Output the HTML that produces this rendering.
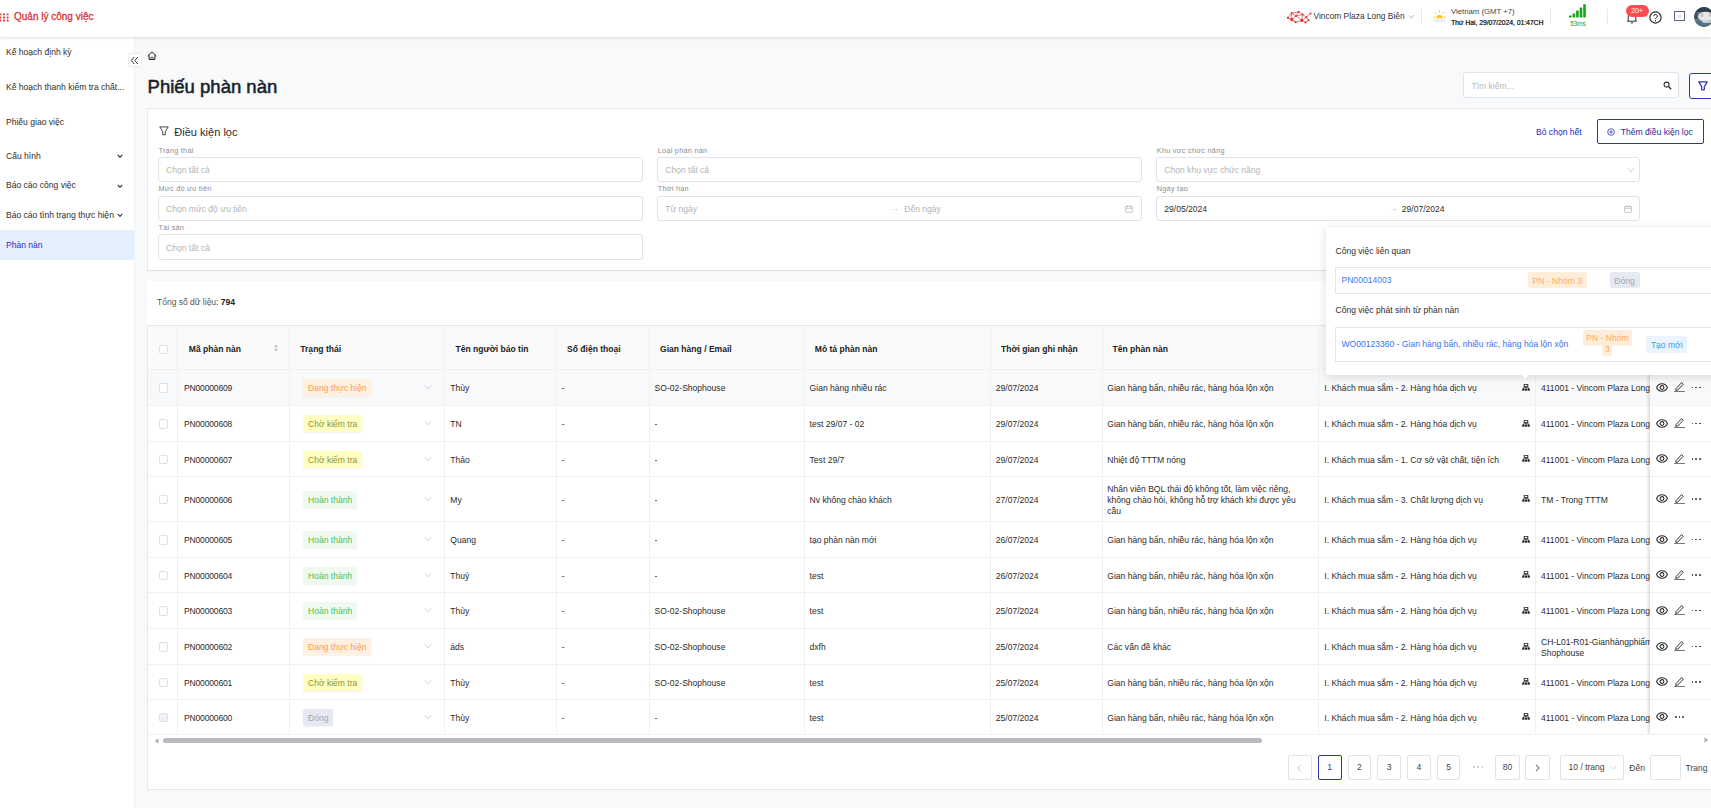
<!DOCTYPE html>
<html lang="vi"><head><meta charset="utf-8"><title>Phiếu phàn nàn</title>
<style>
*{box-sizing:border-box}
html,body{margin:0;padding:0}
body{width:1711px;height:808px;overflow:hidden;position:relative;background:#f8f9fb;
 font-family:"Liberation Sans",sans-serif;font-size:8.55px;color:#303030;line-height:1.2}
.abs{position:absolute}
.t{position:absolute;white-space:nowrap;line-height:12px;height:12px;margin-top:-6px}
#hdr{position:absolute;left:0;top:0;width:1711px;height:37px;background:#fff;box-shadow:0 1px 3px rgba(0,0,0,.13);z-index:5}
#side{position:absolute;left:0;top:37px;width:135px;height:771px;background:#fff;z-index:2;border-right:1px solid #eff1f4}
.mi{position:absolute;left:0;width:134px;height:29.3px}
.mi span{position:absolute;left:6px;top:50%;margin-top:-6px;line-height:12px;white-space:nowrap;color:#2e2e2e}
.card{position:absolute;background:#fff}
.inp{position:absolute;height:24.5px;background:#fff;border:1px solid #dfe3ec;border-radius:3px}
.inp .ph{position:absolute;left:7px;top:50%;margin-top:-4.8px;line-height:12px;color:#b4b4b8;white-space:nowrap}
.lbl{position:absolute;font-size:7.3px;letter-spacing:.25px;color:#8a8d96;white-space:nowrap;line-height:8px;height:8px;margin-top:-4px}
.vl{position:absolute;width:1px;background:#eff0f2}
.hl{position:absolute;height:1px;background:#eff0f2}
.th{position:absolute;font-weight:bold;color:#222;white-space:nowrap;line-height:12px;height:12px;margin-top:-6px}
.td{position:absolute;white-space:nowrap;line-height:11px;color:#2b2b2b}
.cb{position:absolute;width:9px;height:9.5px;border:1px solid #dde0ea;border-radius:2px;background:#fff}
.tag{position:absolute;height:16.5px;line-height:19px;overflow:hidden;padding:0 5px;border-radius:2px;white-space:nowrap;box-shadow:0 1px 2px rgba(0,0,0,.06)}
.tg-o{background:#fff0e2;color:#fb9d4b}
.tg-y{background:#ffffc4;color:#8f9330}
.tg-g{background:#eefaf0;color:#4cbf52}
.tg-d{background:#e6e9f1;color:#a3a8b8}
.tg-b{background:#e9f4fe;color:#3f9be6}
.pg{position:absolute;top:755px;height:25px;border:1px solid #e1e3e8;border-radius:2px;background:#fff;text-align:center;line-height:23.4px;color:#444}
a{color:#3f6df2;text-decoration:none}
</style></head><body>
<div id="hdr"><svg class="abs" style="left:0;top:0" width="12" height="37"><rect x="-0.6" y="13.4" width="2" height="1.9" rx=".4" fill="#e23b3b"/><rect x="3.0" y="13.4" width="2" height="1.9" rx=".4" fill="#e23b3b"/><rect x="6.6000000000000005" y="13.4" width="2" height="1.9" rx=".4" fill="#e23b3b"/><rect x="-0.6" y="16.5" width="2" height="1.9" rx=".4" fill="#e23b3b"/><rect x="3.0" y="16.5" width="2" height="1.9" rx=".4" fill="#e23b3b"/><rect x="6.6000000000000005" y="16.5" width="2" height="1.9" rx=".4" fill="#e23b3b"/><rect x="-0.6" y="19.6" width="2" height="1.9" rx=".4" fill="#e23b3b"/><rect x="3.0" y="19.6" width="2" height="1.9" rx=".4" fill="#e23b3b"/><rect x="6.6000000000000005" y="19.6" width="2" height="1.9" rx=".4" fill="#e23b3b"/></svg><div class="t" style="left:14px;top:17px;font-size:10px;font-weight:normal;-webkit-text-stroke:.3px #dc3535;color:#dc3535">Quản lý công việc</div><svg class="abs" style="left:1286.5px;top:10.5px" width="25" height="13" viewBox="0 0 25 13"><g stroke="#de4a4a" stroke-width=".75"><line x1="0.8" y1="6.8" x2="4.6" y2="2.2"/><line x1="0.8" y1="6.8" x2="4.8" y2="8.4"/><line x1="4.6" y1="2.2" x2="9" y2="4.9"/><line x1="4.8" y1="8.4" x2="9" y2="4.9"/><line x1="4.8" y1="8.4" x2="8.6" y2="11.2"/><line x1="9" y1="4.9" x2="11.6" y2="0.9"/><line x1="9" y1="4.9" x2="14.8" y2="9.4"/><line x1="8.6" y1="11.2" x2="14.8" y2="9.4"/><line x1="11.6" y1="0.9" x2="15.6" y2="3.4"/><line x1="15.6" y1="3.4" x2="14.8" y2="9.4"/><line x1="15.6" y1="3.4" x2="19.4" y2="6.2"/><line x1="14.8" y1="9.4" x2="19.4" y2="6.2"/><line x1="14.8" y1="9.4" x2="18.4" y2="11.4"/><line x1="19.4" y1="6.2" x2="23.6" y2="2.4"/><line x1="19.4" y1="6.2" x2="21.6" y2="9.2"/><line x1="4.6" y1="2.2" x2="11.6" y2="0.9"/><line x1="0.8" y1="6.8" x2="8.6" y2="11.2"/><line x1="9" y1="4.9" x2="15.6" y2="3.4"/><line x1="18.4" y1="11.4" x2="21.6" y2="9.2"/><line x1="4.8" y1="8.4" x2="4.6" y2="2.2"/></g><g fill="#d93030"><circle cx="0.8" cy="6.8" r="1.0"/><circle cx="4.8" cy="8.4" r="1.5"/><circle cx="4.6" cy="2.2" r="1.0"/><circle cx="9" cy="4.9" r="1.0"/><circle cx="8.6" cy="11.2" r="1.0"/><circle cx="11.6" cy="0.9" r="1.0"/><circle cx="14.8" cy="9.4" r="1.5"/><circle cx="15.6" cy="3.4" r="1.0"/><circle cx="19.4" cy="6.2" r="1.0"/><circle cx="18.4" cy="11.4" r="1.0"/><circle cx="23.6" cy="2.4" r="1.0"/><circle cx="21.6" cy="9.2" r="1.0"/></g></svg><div class="t" style="left:1313.5px;top:16.3px;font-size:8.4px;color:#333">Vincom Plaza Long Biên</div><svg style="position:absolute;left:1408.0px;top:13.0px" viewBox="0 0 10 10" width="7" height="7"><path d="M1.2 3 L5 7.2 L8.8 3" fill="none" stroke="#9a9a9a" stroke-width="1.0"/></svg><div class="vl" style="left:1421px;top:9px;height:15px;background:#e9e9ec"></div><svg class="abs" style="left:1432px;top:9px" width="15" height="15" viewBox="0 0 15 15">
<g stroke="#f6c21d" stroke-width=".9" stroke-linecap="round"><path d="M7.5 1.6v1.3M3 3.6l.9.9M12 3.6l-.9.9M1.6 8h1.2M12.4 8h1.2"/></g>
<path d="M4.2 9.4a3.3 3.3 0 0 1 6.6 0z" fill="#f8c51f"/>
<rect x="1.2" y="9.2" width="12.6" height="4.2" rx="2.1" fill="#eef0f4"/></svg><div class="t" style="left:1451px;top:12.2px;font-size:7.75px;color:#444">Vietnam (GMT +7)</div><div class="t" style="left:1451px;top:22.6px;font-size:6.76px;color:#2a2a2a;text-shadow:.2px 0 0 #2a2a2a">Thứ Hai, 29/07/2024, 01:47CH</div><div class="vl" style="left:1550px;top:9px;height:15px;background:#e9e9ec"></div><svg class="abs" style="left:1568.5px;top:4px" width="18" height="14"><rect x="0.0" y="11.399999999999999" width="2.6" height="2.2" rx=".5" fill="#17a317"/><rect x="3.55" y="9.399999999999999" width="2.6" height="4.2" rx=".5" fill="#17a317"/><rect x="7.1" y="6.6" width="2.6" height="7" rx=".5" fill="#17a317"/><rect x="10.649999999999999" y="3.5999999999999996" width="2.6" height="10" rx=".5" fill="#17a317"/><rect x="14.2" y="0.1999999999999993" width="2.6" height="13.4" rx=".5" fill="#17a317"/></svg><div class="t" style="left:1568px;width:20px;text-align:center;top:23.8px;font-size:6.4px;color:#2a9a2a">53ms</div><div class="vl" style="left:1607px;top:9px;height:15px;background:#e9e9ec"></div><svg class="abs" style="left:1626px;top:12px" width="12" height="12" viewBox="0 0 12 12"><path d="M2.2 9.2V5a3.8 3.8 0 0 1 7.6 0v4.2M1.2 9.2h9.6M4.8 10.8h2.4" fill="none" stroke="#333" stroke-width="1"/></svg><div class="abs" style="left:1625.5px;top:4.5px;width:23px;height:12.5px;border-radius:6.3px;background:#ff4b4e;color:#fff;font-size:7.4px;line-height:12.5px;text-align:center;letter-spacing:-.2px">20+</div><svg class="abs" style="left:1648.5px;top:11px" width="13" height="13" viewBox="0 0 13 13"><circle cx="6.5" cy="6.5" r="5.6" fill="none" stroke="#222" stroke-width="1.15"/><path d="M4.7 5.2a1.8 1.8 0 1 1 2.6 1.6c-.6.3-.8.6-.8 1.3" fill="none" stroke="#222" stroke-width="1"/><circle cx="6.5" cy="9.7" r=".65" fill="#222"/></svg><div class="abs" style="left:1673.5px;top:11px;width:11.5px;height:10px;border:1px solid #5d6677;color:#b9bdd0;font-size:5px;line-height:8px;text-align:center">vi</div><svg class="abs" style="left:1694px;top:7px" width="20" height="20" viewBox="0 0 20 20"><defs><clipPath id="av"><circle cx="10" cy="10" r="9.9"/></clipPath></defs>
<g clip-path="url(#av)"><rect width="20" height="20" fill="#5f7a88"/><rect y="0" width="20" height="5" fill="#2e3f50"/><rect x="0" y="4" width="3.4" height="8" fill="#3f4f5e"/><ellipse cx="11.5" cy="9.6" rx="7.4" ry="4.8" fill="#e6e8ea"/><ellipse cx="8" cy="8" rx="1.6" ry="2" fill="#e8b8a4"/><ellipse cx="16" cy="8" rx="1.4" ry="2" fill="#e8b8a4"/><rect x="0" y="14.5" width="20" height="6" fill="#55707e"/><ellipse cx="13" cy="14.5" rx="5" ry="1.6" fill="#c8d2d8"/></g></svg></div><div id="side"><div class="mi" style="top:0.34999999999999964px"><span>Kế hoạch định kỳ</span></div><div class="mi" style="top:35.35px"><span>Kế hoạch thanh kiểm tra chất...</span></div><div class="mi" style="top:70.35px"><span>Phiếu giao việc</span></div><div class="mi" style="top:103.94999999999999px"><span>Cấu hình</span></div><svg style="position:absolute;left:116.7px;top:115.89999999999999px" viewBox="0 0 10 10" width="6" height="6"><path d="M1.2 3 L5 7.2 L8.8 3" fill="none" stroke="#3a3a3a" stroke-width="1.9"/></svg><div class="mi" style="top:133.65px"><span>Báo cáo công việc</span></div><svg style="position:absolute;left:116.7px;top:145.60000000000002px" viewBox="0 0 10 10" width="6" height="6"><path d="M1.2 3 L5 7.2 L8.8 3" fill="none" stroke="#3a3a3a" stroke-width="1.9"/></svg><div class="mi" style="top:163.45px"><span>Báo cáo tình trạng thực hiện</span></div><svg style="position:absolute;left:116.7px;top:175.4px" viewBox="0 0 10 10" width="6" height="6"><path d="M1.2 3 L5 7.2 L8.8 3" fill="none" stroke="#3a3a3a" stroke-width="1.9"/></svg><div class="mi" style="top:193.3px;height:29.3px;background:#e5f0ff"><span style="color:#2a2dc4">Phàn nàn</span></div></div><div class="abs" style="left:127.5px;top:53.3px;width:14px;height:14px;background:#fff;border:1px solid #ebedf1;border-radius:2px;z-index:3">
<svg class="abs" style="left:1px;top:1.6px" width="9" height="9" viewBox="0 0 9 9"><path d="M4.3 1 L1.3 4.5 L4.3 8 M7.8 1 L4.8 4.5 L7.8 8" fill="none" stroke="#333" stroke-width="1"/></svg></div><svg class="abs" style="left:146.6px;top:51.2px" width="10" height="9.5" viewBox="0 0 10 9.5"><path d="M.7 4.9 L5 .9 L9.3 4.9" fill="none" stroke="#222" stroke-width="1" stroke-linejoin="round"/><path d="M2.1 4.2v4.3h5.8V4.2" fill="none" stroke="#222" stroke-width="1"/><path d="M3.9 8.3V6.2h2.2v2.1" fill="none" stroke="#222" stroke-width=".7"/></svg><div class="abs" style="left:147.6px;top:74.6px;font-size:18.5px;line-height:24px;font-weight:normal;color:#1a1f2c;-webkit-text-stroke:.55px #1a1f2c;white-space:nowrap">Phiếu phàn nàn</div><div class="inp" style="left:1463px;top:72px;width:216px;height:26px;border-radius:3px"><span class="ph" style="left:7.5px;color:#b9bbc0">Tìm kiếm...</span><svg class="abs" style="left:199px;top:7.5px" width="9" height="9" viewBox="0 0 9 9"><circle cx="3.6" cy="3.6" r="2.5" fill="none" stroke="#333" stroke-width="1.1"/><path d="M5.5 5.5 L8.2 8.2" stroke="#333" stroke-width="1.4"/></svg></div><div class="abs" style="left:1689px;top:73px;width:26px;height:25.5px;border:1px solid #2d35ad;border-radius:3px;background:#fff"><svg class="abs" style="left:7.5px;top:7px" width="10" height="10" viewBox="0 0 10 10"><path d="M.8 .9h8.4L6.3 5.6v3.2H3.7V5.6z" fill="none" stroke="#2d35ad" stroke-width="1.2" stroke-linejoin="round"/></svg></div><div class="card" style="left:147px;top:108px;width:1570px;height:162.6px;border:1px solid #e4e7ec;border-bottom-color:#dde0e6"></div><svg class="abs" style="left:158.5px;top:125.5px" width="10" height="10" viewBox="0 0 10 10"><path d="M.8 .9h8.4L6.3 5.6v3.2H3.7V5.6z" fill="none" stroke="#333" stroke-width="0.9" stroke-linejoin="round"/></svg><div class="t" style="left:174.3px;top:131.6px;font-size:11.05px;height:14px;line-height:14px;margin-top:-7px;color:#2b2b2b">Điều kiện lọc</div><div class="t" style="left:1536px;top:131.6px;color:#2328c6;font-size:8.57px">Bỏ chọn hết</div><div class="abs" style="left:1597px;top:119px;width:106.5px;height:25px;border:1px solid #2d35ad;border-radius:2px;background:#fff"></div><svg class="abs" style="left:1606.5px;top:128px" width="8" height="8" viewBox="0 0 8 8"><circle cx="4" cy="4" r="3.3" fill="none" stroke="#2d35ad" stroke-width=".8"/><path d="M4 2.3v3.4M2.3 4h3.4" stroke="#2d35ad" stroke-width=".8"/></svg><div class="t" style="left:1620.7px;top:131.6px;color:#262c9e;font-size:8.6px">Thêm điều kiện lọc</div><div class="lbl" style="left:158.5px;top:150.7px">Trạng thái</div><div class="inp" style="left:158px;top:157px;width:484.5px;height:24.5px"><span class="ph">Chọn tất cả</span></div><div class="lbl" style="left:657.8px;top:150.7px">Loại phàn nàn</div><div class="inp" style="left:657.3px;top:157px;width:484.5px;height:24.5px"><span class="ph">Chọn tất cả</span></div><div class="lbl" style="left:1156.8px;top:150.7px">Khu vực chức năng</div><div class="inp" style="left:1156.3px;top:157px;width:483.5px;height:24.5px"><span class="ph">Chọn khu vực chức năng</span><svg style="position:absolute;left:469.5px;top:7.5px" viewBox="0 0 10 10" width="8" height="8"><path d="M1.2 3 L5 7.2 L8.8 3" fill="none" stroke="#b5b7bd" stroke-width="1.0"/></svg></div><div class="lbl" style="left:158.5px;top:188.7px">Mức độ ưu tiên</div><div class="inp" style="left:158px;top:196px;width:484.5px;height:24.5px"><span class="ph">Chọn mức độ ưu tiên</span></div><div class="lbl" style="left:657.8px;top:188.7px">Thời hạn</div><div class="inp" style="left:657.3px;top:196px;width:484.5px;height:24.5px"><span class="ph">Từ ngày</span><span class="ph" style="left:246px">Đến ngày</span><span class="ph" style="left:232.5px;font-size:8px">→</span><svg class="abs" style="left:467px;top:8px" width="8" height="8" viewBox="0 0 8 8"><rect x=".6" y="1.3" width="6.8" height="6" rx=".6" fill="none" stroke="#b5b7bd" stroke-width=".8"/><path d="M.6 3.2h6.8M2.3 .4v1.6M5.7 .4v1.6" stroke="#b5b7bd" stroke-width=".8"/></svg></div><div class="lbl" style="left:1156.8px;top:188.7px">Ngày tạo</div><div class="inp" style="left:1156.3px;top:196px;width:483.5px;height:24.5px"><span class="ph" style="color:#303030">29/05/2024</span><span class="ph" style="left:244.5px;color:#303030">29/07/2024</span><span class="ph" style="left:232px;font-size:8px">→</span><svg class="abs" style="left:467px;top:8px" width="8" height="8" viewBox="0 0 8 8"><rect x=".6" y="1.3" width="6.8" height="6" rx=".6" fill="none" stroke="#b5b7bd" stroke-width=".8"/><path d="M.6 3.2h6.8M2.3 .4v1.6M5.7 .4v1.6" stroke="#b5b7bd" stroke-width=".8"/></svg></div><div class="lbl" style="left:158.5px;top:227.7px">Tài sản</div><div class="inp" style="left:158px;top:234px;width:484.5px;height:25.7px"><span class="ph">Chọn tất cả</span></div><div class="card" style="left:147px;top:281px;width:1570px;height:508.5px;border-bottom:1px solid #e2e5ea"></div><div class="vl" style="left:147px;top:325px;height:464px;background:#e6e8ec"></div><div class="t" style="left:157px;top:302px;color:#555;font-size:8.5px">Tổng số dữ liệu: <b style="color:#222">794</b></div><div class="abs" style="left:148px;top:325px;width:1570px;height:44px;background:#fafafb"></div><div class="abs" style="left:148px;top:369px;width:1570px;height:36px;background:#f8f9fb"></div><div class="hl" style="left:148px;top:325px;width:1570px;background:#e3e5e9"></div><div class="vl" style="left:147px;top:325px;height:409px;background:#e6e8ec"></div><div class="vl" style="left:177px;top:325px;height:409px"></div><div class="vl" style="left:289px;top:325px;height:409px"></div><div class="vl" style="left:444px;top:325px;height:409px"></div><div class="vl" style="left:556px;top:325px;height:409px"></div><div class="vl" style="left:649px;top:325px;height:409px"></div><div class="vl" style="left:804px;top:325px;height:409px"></div><div class="vl" style="left:990px;top:325px;height:409px"></div><div class="vl" style="left:1102px;top:325px;height:409px"></div><div class="vl" style="left:1318px;top:325px;height:409px"></div><div class="vl" style="left:1535px;top:325px;height:409px"></div><div class="hl" style="left:148px;top:369px;width:1570px"></div><div class="hl" style="left:148px;top:405px;width:1570px"></div><div class="hl" style="left:148px;top:441px;width:1570px"></div><div class="hl" style="left:148px;top:476px;width:1570px"></div><div class="hl" style="left:148px;top:521px;width:1570px"></div><div class="hl" style="left:148px;top:557px;width:1570px"></div><div class="hl" style="left:148px;top:592px;width:1570px"></div><div class="hl" style="left:148px;top:628px;width:1570px"></div><div class="hl" style="left:148px;top:664px;width:1570px"></div><div class="hl" style="left:148px;top:699px;width:1570px"></div><div class="hl" style="left:148px;top:734px;width:1570px"></div><div class="cb" style="left:159px;top:344.5px"></div><div class="th" style="left:188.8px;top:349px">Mã phàn nàn</div><div class="th" style="left:300.3px;top:349px">Trạng thái</div><div class="th" style="left:455.5px;top:349px">Tên người báo tin</div><div class="th" style="left:567px;top:349px">Số điện thoại</div><div class="th" style="left:660px;top:349px">Gian hàng / Email</div><div class="th" style="left:814.8px;top:349px">Mô tả phàn nàn</div><div class="th" style="left:1001px;top:349px">Thời gian ghi nhận</div><div class="th" style="left:1112.5px;top:349px">Tên phàn nàn</div><svg class="abs" style="left:273px;top:343.5px" width="6" height="8" viewBox="0 0 6 8"><path d="M3 .6 L5.2 3.2H.8z" fill="#bfbfc4"/><path d="M3 7.4 L5.2 4.8H.8z" fill="#bfbfc4"/></svg><div class="cb" style="left:159px;top:383.0px;"></div><div class="td" style="left:184px;top:383.25px;letter-spacing:-.17px;">PN00000609</div><div class="tag tg-o" style="left:303px;top:379px">Đang thực hiện</div><svg style="position:absolute;left:424.3px;top:383.45px" viewBox="0 0 10 10" width="8" height="8"><path d="M1.2 3 L5 7.2 L8.8 3" fill="none" stroke="#c4c6cc" stroke-width="1.0"/></svg><div class="td" style="left:450.3px;top:383.25px;">Thùy</div><div class="td" style="left:561.8px;top:383.25px;">-</div><div class="td" style="left:654.6px;top:383.25px;">SO-02-Shophouse</div><div class="td" style="left:809.6px;top:383.25px;">Gian hàng nhiều rác</div><div class="td" style="left:995.8px;top:383.25px;">29/07/2024</div><div class="td" style="left:1107.3px;top:383.25px;">Gian hàng bẩn, nhiều rác, hàng hóa lộn xộn</div><div class="td" style="left:1324.3px;top:383.25px;">I. Khách mua sắm - 2. Hàng hóa dịch vụ</div><svg class="abs" style="left:1521.8px;top:383.9px" width="8" height="7" viewBox="0 0 8 7"><rect x="2.2" y=".3" width="3.6" height="2.4" fill="none" stroke="#222" stroke-width=".9"/><path d="M4 2.7v1.2M1.3 5V3.9h5.4V5" fill="none" stroke="#222" stroke-width=".8"/><rect x=".2" y="4.7" width="2.2" height="2" fill="#222"/><rect x="2.9" y="4.7" width="2.2" height="2" fill="#222"/><rect x="5.6" y="4.7" width="2.2" height="2" fill="#222"/></svg><div class="td" style="left:1541px;top:383.25px;width:109px;overflow:hidden">411001 - Vincom Plaza Long Biên</div><div class="cb" style="left:159px;top:419.0px;"></div><div class="td" style="left:184px;top:419.25px;letter-spacing:-.17px;">PN00000608</div><div class="tag tg-y" style="left:303px;top:415px">Chờ kiểm tra</div><svg style="position:absolute;left:424.3px;top:419.45px" viewBox="0 0 10 10" width="8" height="8"><path d="M1.2 3 L5 7.2 L8.8 3" fill="none" stroke="#c4c6cc" stroke-width="1.0"/></svg><div class="td" style="left:450.3px;top:419.25px;">TN</div><div class="td" style="left:561.8px;top:419.25px;">-</div><div class="td" style="left:654.6px;top:419.25px;">-</div><div class="td" style="left:809.6px;top:419.25px;">test 29/07 - 02</div><div class="td" style="left:995.8px;top:419.25px;">29/07/2024</div><div class="td" style="left:1107.3px;top:419.25px;">Gian hàng bẩn, nhiều rác, hàng hóa lộn xộn</div><div class="td" style="left:1324.3px;top:419.25px;">I. Khách mua sắm - 2. Hàng hóa dịch vụ</div><svg class="abs" style="left:1521.8px;top:419.9px" width="8" height="7" viewBox="0 0 8 7"><rect x="2.2" y=".3" width="3.6" height="2.4" fill="none" stroke="#222" stroke-width=".9"/><path d="M4 2.7v1.2M1.3 5V3.9h5.4V5" fill="none" stroke="#222" stroke-width=".8"/><rect x=".2" y="4.7" width="2.2" height="2" fill="#222"/><rect x="2.9" y="4.7" width="2.2" height="2" fill="#222"/><rect x="5.6" y="4.7" width="2.2" height="2" fill="#222"/></svg><div class="td" style="left:1541px;top:419.25px;width:109px;overflow:hidden">411001 - Vincom Plaza Long Biên</div><div class="cb" style="left:159px;top:454.5px;"></div><div class="td" style="left:184px;top:454.75px;letter-spacing:-.17px;">PN00000607</div><div class="tag tg-y" style="left:303px;top:451px">Chờ kiểm tra</div><svg style="position:absolute;left:424.3px;top:454.95px" viewBox="0 0 10 10" width="8" height="8"><path d="M1.2 3 L5 7.2 L8.8 3" fill="none" stroke="#c4c6cc" stroke-width="1.0"/></svg><div class="td" style="left:450.3px;top:454.75px;">Thảo</div><div class="td" style="left:561.8px;top:454.75px;">-</div><div class="td" style="left:654.6px;top:454.75px;">-</div><div class="td" style="left:809.6px;top:454.75px;">Test 29/7</div><div class="td" style="left:995.8px;top:454.75px;">29/07/2024</div><div class="td" style="left:1107.3px;top:454.75px;">Nhiệt độ TTTM nóng</div><div class="td" style="left:1324.3px;top:454.75px;">I. Khách mua sắm - 1. Cơ sở vật chất, tiện ích</div><svg class="abs" style="left:1521.8px;top:455.4px" width="8" height="7" viewBox="0 0 8 7"><rect x="2.2" y=".3" width="3.6" height="2.4" fill="none" stroke="#222" stroke-width=".9"/><path d="M4 2.7v1.2M1.3 5V3.9h5.4V5" fill="none" stroke="#222" stroke-width=".8"/><rect x=".2" y="4.7" width="2.2" height="2" fill="#222"/><rect x="2.9" y="4.7" width="2.2" height="2" fill="#222"/><rect x="5.6" y="4.7" width="2.2" height="2" fill="#222"/></svg><div class="td" style="left:1541px;top:454.75px;width:109px;overflow:hidden">411001 - Vincom Plaza Long Biên</div><div class="cb" style="left:159px;top:494.5px;"></div><div class="td" style="left:184px;top:494.75px;letter-spacing:-.17px;">PN00000606</div><div class="tag tg-g" style="left:303px;top:491px">Hoàn thành</div><svg style="position:absolute;left:424.3px;top:494.95px" viewBox="0 0 10 10" width="8" height="8"><path d="M1.2 3 L5 7.2 L8.8 3" fill="none" stroke="#c4c6cc" stroke-width="1.0"/></svg><div class="td" style="left:450.3px;top:494.75px;">My</div><div class="td" style="left:561.8px;top:494.75px;">-</div><div class="td" style="left:654.6px;top:494.75px;">-</div><div class="td" style="left:809.6px;top:494.75px;">Nv không chào khách</div><div class="td" style="left:995.8px;top:494.75px;">27/07/2024</div><div class="td" style="left:1107.3px;top:483.75px;">Nhân viên BQL thái độ không tốt, làm việc riêng,<br>không chào hỏi, không hỗ trợ khách khi được yêu<br>cầu</div><div class="td" style="left:1324.3px;top:494.75px;">I. Khách mua sắm - 3. Chất lượng dịch vụ</div><svg class="abs" style="left:1521.8px;top:495.4px" width="8" height="7" viewBox="0 0 8 7"><rect x="2.2" y=".3" width="3.6" height="2.4" fill="none" stroke="#222" stroke-width=".9"/><path d="M4 2.7v1.2M1.3 5V3.9h5.4V5" fill="none" stroke="#222" stroke-width=".8"/><rect x=".2" y="4.7" width="2.2" height="2" fill="#222"/><rect x="2.9" y="4.7" width="2.2" height="2" fill="#222"/><rect x="5.6" y="4.7" width="2.2" height="2" fill="#222"/></svg><div class="td" style="left:1541px;top:494.75px;width:109px;overflow:hidden">TM - Trong TTTM</div><div class="cb" style="left:159px;top:535.0px;"></div><div class="td" style="left:184px;top:535.25px;letter-spacing:-.17px;">PN00000605</div><div class="tag tg-g" style="left:303px;top:531px">Hoàn thành</div><svg style="position:absolute;left:424.3px;top:535.45px" viewBox="0 0 10 10" width="8" height="8"><path d="M1.2 3 L5 7.2 L8.8 3" fill="none" stroke="#c4c6cc" stroke-width="1.0"/></svg><div class="td" style="left:450.3px;top:535.25px;">Quang</div><div class="td" style="left:561.8px;top:535.25px;">-</div><div class="td" style="left:654.6px;top:535.25px;">-</div><div class="td" style="left:809.6px;top:535.25px;">tạo phàn nàn mới</div><div class="td" style="left:995.8px;top:535.25px;">26/07/2024</div><div class="td" style="left:1107.3px;top:535.25px;">Gian hàng bẩn, nhiều rác, hàng hóa lộn xộn</div><div class="td" style="left:1324.3px;top:535.25px;">I. Khách mua sắm - 2. Hàng hóa dịch vụ</div><svg class="abs" style="left:1521.8px;top:535.9px" width="8" height="7" viewBox="0 0 8 7"><rect x="2.2" y=".3" width="3.6" height="2.4" fill="none" stroke="#222" stroke-width=".9"/><path d="M4 2.7v1.2M1.3 5V3.9h5.4V5" fill="none" stroke="#222" stroke-width=".8"/><rect x=".2" y="4.7" width="2.2" height="2" fill="#222"/><rect x="2.9" y="4.7" width="2.2" height="2" fill="#222"/><rect x="5.6" y="4.7" width="2.2" height="2" fill="#222"/></svg><div class="td" style="left:1541px;top:535.25px;width:109px;overflow:hidden">411001 - Vincom Plaza Long Biên</div><div class="cb" style="left:159px;top:570.5px;"></div><div class="td" style="left:184px;top:570.75px;letter-spacing:-.17px;">PN00000604</div><div class="tag tg-g" style="left:303px;top:567px">Hoàn thành</div><svg style="position:absolute;left:424.3px;top:570.95px" viewBox="0 0 10 10" width="8" height="8"><path d="M1.2 3 L5 7.2 L8.8 3" fill="none" stroke="#c4c6cc" stroke-width="1.0"/></svg><div class="td" style="left:450.3px;top:570.75px;">Thuỷ</div><div class="td" style="left:561.8px;top:570.75px;">-</div><div class="td" style="left:654.6px;top:570.75px;">-</div><div class="td" style="left:809.6px;top:570.75px;">test</div><div class="td" style="left:995.8px;top:570.75px;">26/07/2024</div><div class="td" style="left:1107.3px;top:570.75px;">Gian hàng bẩn, nhiều rác, hàng hóa lộn xộn</div><div class="td" style="left:1324.3px;top:570.75px;">I. Khách mua sắm - 2. Hàng hóa dịch vụ</div><svg class="abs" style="left:1521.8px;top:571.4px" width="8" height="7" viewBox="0 0 8 7"><rect x="2.2" y=".3" width="3.6" height="2.4" fill="none" stroke="#222" stroke-width=".9"/><path d="M4 2.7v1.2M1.3 5V3.9h5.4V5" fill="none" stroke="#222" stroke-width=".8"/><rect x=".2" y="4.7" width="2.2" height="2" fill="#222"/><rect x="2.9" y="4.7" width="2.2" height="2" fill="#222"/><rect x="5.6" y="4.7" width="2.2" height="2" fill="#222"/></svg><div class="td" style="left:1541px;top:570.75px;width:109px;overflow:hidden">411001 - Vincom Plaza Long Biên</div><div class="cb" style="left:159px;top:606.0px;"></div><div class="td" style="left:184px;top:606.25px;letter-spacing:-.17px;">PN00000603</div><div class="tag tg-g" style="left:303px;top:602px">Hoàn thành</div><svg style="position:absolute;left:424.3px;top:606.45px" viewBox="0 0 10 10" width="8" height="8"><path d="M1.2 3 L5 7.2 L8.8 3" fill="none" stroke="#c4c6cc" stroke-width="1.0"/></svg><div class="td" style="left:450.3px;top:606.25px;">Thùy</div><div class="td" style="left:561.8px;top:606.25px;">-</div><div class="td" style="left:654.6px;top:606.25px;">SO-02-Shophouse</div><div class="td" style="left:809.6px;top:606.25px;">test</div><div class="td" style="left:995.8px;top:606.25px;">25/07/2024</div><div class="td" style="left:1107.3px;top:606.25px;">Gian hàng bẩn, nhiều rác, hàng hóa lộn xộn</div><div class="td" style="left:1324.3px;top:606.25px;">I. Khách mua sắm - 2. Hàng hóa dịch vụ</div><svg class="abs" style="left:1521.8px;top:606.9px" width="8" height="7" viewBox="0 0 8 7"><rect x="2.2" y=".3" width="3.6" height="2.4" fill="none" stroke="#222" stroke-width=".9"/><path d="M4 2.7v1.2M1.3 5V3.9h5.4V5" fill="none" stroke="#222" stroke-width=".8"/><rect x=".2" y="4.7" width="2.2" height="2" fill="#222"/><rect x="2.9" y="4.7" width="2.2" height="2" fill="#222"/><rect x="5.6" y="4.7" width="2.2" height="2" fill="#222"/></svg><div class="td" style="left:1541px;top:606.25px;width:109px;overflow:hidden">411001 - Vincom Plaza Long Biên</div><div class="cb" style="left:159px;top:642.0px;"></div><div class="td" style="left:184px;top:642.25px;letter-spacing:-.17px;">PN00000602</div><div class="tag tg-o" style="left:303px;top:638px">Đang thực hiện</div><svg style="position:absolute;left:424.3px;top:642.45px" viewBox="0 0 10 10" width="8" height="8"><path d="M1.2 3 L5 7.2 L8.8 3" fill="none" stroke="#c4c6cc" stroke-width="1.0"/></svg><div class="td" style="left:450.3px;top:642.25px;">áds</div><div class="td" style="left:561.8px;top:642.25px;">-</div><div class="td" style="left:654.6px;top:642.25px;">SO-02-Shophouse</div><div class="td" style="left:809.6px;top:642.25px;">dxfh</div><div class="td" style="left:995.8px;top:642.25px;">25/07/2024</div><div class="td" style="left:1107.3px;top:642.25px;">Các vấn đề khác</div><div class="td" style="left:1324.3px;top:642.25px;">I. Khách mua sắm - 2. Hàng hóa dịch vụ</div><svg class="abs" style="left:1521.8px;top:642.9px" width="8" height="7" viewBox="0 0 8 7"><rect x="2.2" y=".3" width="3.6" height="2.4" fill="none" stroke="#222" stroke-width=".9"/><path d="M4 2.7v1.2M1.3 5V3.9h5.4V5" fill="none" stroke="#222" stroke-width=".8"/><rect x=".2" y="4.7" width="2.2" height="2" fill="#222"/><rect x="2.9" y="4.7" width="2.2" height="2" fill="#222"/><rect x="5.6" y="4.7" width="2.2" height="2" fill="#222"/></svg><div class="td" style="left:1541px;top:636.75px;width:109px;overflow:hidden">CH-L01-R01-Gianhàngphiẩm<br>Shophouse</div><div class="cb" style="left:159px;top:677.5px;"></div><div class="td" style="left:184px;top:677.75px;letter-spacing:-.17px;">PN00000601</div><div class="tag tg-y" style="left:303px;top:674px">Chờ kiểm tra</div><svg style="position:absolute;left:424.3px;top:677.95px" viewBox="0 0 10 10" width="8" height="8"><path d="M1.2 3 L5 7.2 L8.8 3" fill="none" stroke="#c4c6cc" stroke-width="1.0"/></svg><div class="td" style="left:450.3px;top:677.75px;">Thùy</div><div class="td" style="left:561.8px;top:677.75px;">-</div><div class="td" style="left:654.6px;top:677.75px;">SO-02-Shophouse</div><div class="td" style="left:809.6px;top:677.75px;">test</div><div class="td" style="left:995.8px;top:677.75px;">25/07/2024</div><div class="td" style="left:1107.3px;top:677.75px;">Gian hàng bẩn, nhiều rác, hàng hóa lộn xộn</div><div class="td" style="left:1324.3px;top:677.75px;">I. Khách mua sắm - 2. Hàng hóa dịch vụ</div><svg class="abs" style="left:1521.8px;top:678.4px" width="8" height="7" viewBox="0 0 8 7"><rect x="2.2" y=".3" width="3.6" height="2.4" fill="none" stroke="#222" stroke-width=".9"/><path d="M4 2.7v1.2M1.3 5V3.9h5.4V5" fill="none" stroke="#222" stroke-width=".8"/><rect x=".2" y="4.7" width="2.2" height="2" fill="#222"/><rect x="2.9" y="4.7" width="2.2" height="2" fill="#222"/><rect x="5.6" y="4.7" width="2.2" height="2" fill="#222"/></svg><div class="td" style="left:1541px;top:677.75px;width:109px;overflow:hidden">411001 - Vincom Plaza Long Biên</div><div class="cb" style="left:159px;top:712.5px;background:#f0f2f6;"></div><div class="td" style="left:184px;top:712.75px;letter-spacing:-.17px;">PN00000600</div><div class="tag tg-d" style="left:303px;top:709px">Đóng</div><svg style="position:absolute;left:424.3px;top:712.95px" viewBox="0 0 10 10" width="8" height="8"><path d="M1.2 3 L5 7.2 L8.8 3" fill="none" stroke="#c4c6cc" stroke-width="1.0"/></svg><div class="td" style="left:450.3px;top:712.75px;">Thùy</div><div class="td" style="left:561.8px;top:712.75px;">-</div><div class="td" style="left:654.6px;top:712.75px;">-</div><div class="td" style="left:809.6px;top:712.75px;">test</div><div class="td" style="left:995.8px;top:712.75px;">25/07/2024</div><div class="td" style="left:1107.3px;top:712.75px;">Gian hàng bẩn, nhiều rác, hàng hóa lộn xộn</div><div class="td" style="left:1324.3px;top:712.75px;">I. Khách mua sắm - 2. Hàng hóa dịch vụ</div><svg class="abs" style="left:1521.8px;top:713.4px" width="8" height="7" viewBox="0 0 8 7"><rect x="2.2" y=".3" width="3.6" height="2.4" fill="none" stroke="#222" stroke-width=".9"/><path d="M4 2.7v1.2M1.3 5V3.9h5.4V5" fill="none" stroke="#222" stroke-width=".8"/><rect x=".2" y="4.7" width="2.2" height="2" fill="#222"/><rect x="2.9" y="4.7" width="2.2" height="2" fill="#222"/><rect x="5.6" y="4.7" width="2.2" height="2" fill="#222"/></svg><div class="td" style="left:1541px;top:712.75px;width:109px;overflow:hidden">411001 - Vincom Plaza Long Biên</div><div class="abs" style="left:1650px;top:369px;width:70px;height:365px;background:#fff"></div><div class="abs" style="left:1646px;top:369px;width:4px;height:365px;background:linear-gradient(to right,rgba(0,0,0,0),rgba(0,0,0,.13))"></div><div class="abs" style="left:1650px;top:369px;width:70px;height:36px;background:#f8f9fb"></div><div class="hl" style="left:1650px;top:405px;width:70px"></div><div class="hl" style="left:1650px;top:441px;width:70px"></div><div class="hl" style="left:1650px;top:476px;width:70px"></div><div class="hl" style="left:1650px;top:521px;width:70px"></div><div class="hl" style="left:1650px;top:557px;width:70px"></div><div class="hl" style="left:1650px;top:592px;width:70px"></div><div class="hl" style="left:1650px;top:628px;width:70px"></div><div class="hl" style="left:1650px;top:664px;width:70px"></div><div class="hl" style="left:1650px;top:699px;width:70px"></div><div class="hl" style="left:1650px;top:734px;width:70px"></div><svg class="abs" style="left:1655.8px;top:382.5px" width="12" height="9" viewBox="0 0 12 9"><path d="M.6 4.5C1.6 2 3.6 .7 6 .7s4.4 1.3 5.4 3.8C10.4 7 8.4 8.3 6 8.3S1.6 7 .6 4.5z" fill="none" stroke="#2a2a2a" stroke-width="1.05"/><circle cx="6" cy="4.5" r="1.9" fill="none" stroke="#2a2a2a" stroke-width="1.05"/></svg><svg class="abs" style="left:1674.3px;top:381.0px" width="11" height="11" viewBox="0 0 11 11"><path d="M2 7.6 L7.6 1.6 L9.3 3.2 L3.8 9 L1.7 9.4z" fill="none" stroke="#222" stroke-width=".9" stroke-linejoin="round"/><path d="M.2 10.5h10.8" stroke="#777" stroke-width="1"/></svg><div class="abs" style="left:1691.8px;top:386.5px;width:1.5px;height:1.5px;border-radius:1px;background:#333"></div><div class="abs" style="left:1695.3999999999999px;top:386.5px;width:1.5px;height:1.5px;border-radius:1px;background:#333"></div><div class="abs" style="left:1699.0px;top:386.5px;width:1.5px;height:1.5px;border-radius:1px;background:#333"></div><svg class="abs" style="left:1655.8px;top:418.5px" width="12" height="9" viewBox="0 0 12 9"><path d="M.6 4.5C1.6 2 3.6 .7 6 .7s4.4 1.3 5.4 3.8C10.4 7 8.4 8.3 6 8.3S1.6 7 .6 4.5z" fill="none" stroke="#2a2a2a" stroke-width="1.05"/><circle cx="6" cy="4.5" r="1.9" fill="none" stroke="#2a2a2a" stroke-width="1.05"/></svg><svg class="abs" style="left:1674.3px;top:417.0px" width="11" height="11" viewBox="0 0 11 11"><path d="M2 7.6 L7.6 1.6 L9.3 3.2 L3.8 9 L1.7 9.4z" fill="none" stroke="#222" stroke-width=".9" stroke-linejoin="round"/><path d="M.2 10.5h10.8" stroke="#777" stroke-width="1"/></svg><div class="abs" style="left:1691.8px;top:422.5px;width:1.5px;height:1.5px;border-radius:1px;background:#333"></div><div class="abs" style="left:1695.3999999999999px;top:422.5px;width:1.5px;height:1.5px;border-radius:1px;background:#333"></div><div class="abs" style="left:1699.0px;top:422.5px;width:1.5px;height:1.5px;border-radius:1px;background:#333"></div><svg class="abs" style="left:1655.8px;top:454.0px" width="12" height="9" viewBox="0 0 12 9"><path d="M.6 4.5C1.6 2 3.6 .7 6 .7s4.4 1.3 5.4 3.8C10.4 7 8.4 8.3 6 8.3S1.6 7 .6 4.5z" fill="none" stroke="#2a2a2a" stroke-width="1.05"/><circle cx="6" cy="4.5" r="1.9" fill="none" stroke="#2a2a2a" stroke-width="1.05"/></svg><svg class="abs" style="left:1674.3px;top:452.5px" width="11" height="11" viewBox="0 0 11 11"><path d="M2 7.6 L7.6 1.6 L9.3 3.2 L3.8 9 L1.7 9.4z" fill="none" stroke="#222" stroke-width=".9" stroke-linejoin="round"/><path d="M.2 10.5h10.8" stroke="#777" stroke-width="1"/></svg><div class="abs" style="left:1691.8px;top:458.0px;width:1.5px;height:1.5px;border-radius:1px;background:#333"></div><div class="abs" style="left:1695.3999999999999px;top:458.0px;width:1.5px;height:1.5px;border-radius:1px;background:#333"></div><div class="abs" style="left:1699.0px;top:458.0px;width:1.5px;height:1.5px;border-radius:1px;background:#333"></div><svg class="abs" style="left:1655.8px;top:494.0px" width="12" height="9" viewBox="0 0 12 9"><path d="M.6 4.5C1.6 2 3.6 .7 6 .7s4.4 1.3 5.4 3.8C10.4 7 8.4 8.3 6 8.3S1.6 7 .6 4.5z" fill="none" stroke="#2a2a2a" stroke-width="1.05"/><circle cx="6" cy="4.5" r="1.9" fill="none" stroke="#2a2a2a" stroke-width="1.05"/></svg><svg class="abs" style="left:1674.3px;top:492.5px" width="11" height="11" viewBox="0 0 11 11"><path d="M2 7.6 L7.6 1.6 L9.3 3.2 L3.8 9 L1.7 9.4z" fill="none" stroke="#222" stroke-width=".9" stroke-linejoin="round"/><path d="M.2 10.5h10.8" stroke="#777" stroke-width="1"/></svg><div class="abs" style="left:1691.8px;top:498.0px;width:1.5px;height:1.5px;border-radius:1px;background:#333"></div><div class="abs" style="left:1695.3999999999999px;top:498.0px;width:1.5px;height:1.5px;border-radius:1px;background:#333"></div><div class="abs" style="left:1699.0px;top:498.0px;width:1.5px;height:1.5px;border-radius:1px;background:#333"></div><svg class="abs" style="left:1655.8px;top:534.5px" width="12" height="9" viewBox="0 0 12 9"><path d="M.6 4.5C1.6 2 3.6 .7 6 .7s4.4 1.3 5.4 3.8C10.4 7 8.4 8.3 6 8.3S1.6 7 .6 4.5z" fill="none" stroke="#2a2a2a" stroke-width="1.05"/><circle cx="6" cy="4.5" r="1.9" fill="none" stroke="#2a2a2a" stroke-width="1.05"/></svg><svg class="abs" style="left:1674.3px;top:533.0px" width="11" height="11" viewBox="0 0 11 11"><path d="M2 7.6 L7.6 1.6 L9.3 3.2 L3.8 9 L1.7 9.4z" fill="none" stroke="#222" stroke-width=".9" stroke-linejoin="round"/><path d="M.2 10.5h10.8" stroke="#777" stroke-width="1"/></svg><div class="abs" style="left:1691.8px;top:538.5px;width:1.5px;height:1.5px;border-radius:1px;background:#333"></div><div class="abs" style="left:1695.3999999999999px;top:538.5px;width:1.5px;height:1.5px;border-radius:1px;background:#333"></div><div class="abs" style="left:1699.0px;top:538.5px;width:1.5px;height:1.5px;border-radius:1px;background:#333"></div><svg class="abs" style="left:1655.8px;top:570.0px" width="12" height="9" viewBox="0 0 12 9"><path d="M.6 4.5C1.6 2 3.6 .7 6 .7s4.4 1.3 5.4 3.8C10.4 7 8.4 8.3 6 8.3S1.6 7 .6 4.5z" fill="none" stroke="#2a2a2a" stroke-width="1.05"/><circle cx="6" cy="4.5" r="1.9" fill="none" stroke="#2a2a2a" stroke-width="1.05"/></svg><svg class="abs" style="left:1674.3px;top:568.5px" width="11" height="11" viewBox="0 0 11 11"><path d="M2 7.6 L7.6 1.6 L9.3 3.2 L3.8 9 L1.7 9.4z" fill="none" stroke="#222" stroke-width=".9" stroke-linejoin="round"/><path d="M.2 10.5h10.8" stroke="#777" stroke-width="1"/></svg><div class="abs" style="left:1691.8px;top:574.0px;width:1.5px;height:1.5px;border-radius:1px;background:#333"></div><div class="abs" style="left:1695.3999999999999px;top:574.0px;width:1.5px;height:1.5px;border-radius:1px;background:#333"></div><div class="abs" style="left:1699.0px;top:574.0px;width:1.5px;height:1.5px;border-radius:1px;background:#333"></div><svg class="abs" style="left:1655.8px;top:605.5px" width="12" height="9" viewBox="0 0 12 9"><path d="M.6 4.5C1.6 2 3.6 .7 6 .7s4.4 1.3 5.4 3.8C10.4 7 8.4 8.3 6 8.3S1.6 7 .6 4.5z" fill="none" stroke="#2a2a2a" stroke-width="1.05"/><circle cx="6" cy="4.5" r="1.9" fill="none" stroke="#2a2a2a" stroke-width="1.05"/></svg><svg class="abs" style="left:1674.3px;top:604.0px" width="11" height="11" viewBox="0 0 11 11"><path d="M2 7.6 L7.6 1.6 L9.3 3.2 L3.8 9 L1.7 9.4z" fill="none" stroke="#222" stroke-width=".9" stroke-linejoin="round"/><path d="M.2 10.5h10.8" stroke="#777" stroke-width="1"/></svg><div class="abs" style="left:1691.8px;top:609.5px;width:1.5px;height:1.5px;border-radius:1px;background:#333"></div><div class="abs" style="left:1695.3999999999999px;top:609.5px;width:1.5px;height:1.5px;border-radius:1px;background:#333"></div><div class="abs" style="left:1699.0px;top:609.5px;width:1.5px;height:1.5px;border-radius:1px;background:#333"></div><svg class="abs" style="left:1655.8px;top:641.5px" width="12" height="9" viewBox="0 0 12 9"><path d="M.6 4.5C1.6 2 3.6 .7 6 .7s4.4 1.3 5.4 3.8C10.4 7 8.4 8.3 6 8.3S1.6 7 .6 4.5z" fill="none" stroke="#2a2a2a" stroke-width="1.05"/><circle cx="6" cy="4.5" r="1.9" fill="none" stroke="#2a2a2a" stroke-width="1.05"/></svg><svg class="abs" style="left:1674.3px;top:640.0px" width="11" height="11" viewBox="0 0 11 11"><path d="M2 7.6 L7.6 1.6 L9.3 3.2 L3.8 9 L1.7 9.4z" fill="none" stroke="#222" stroke-width=".9" stroke-linejoin="round"/><path d="M.2 10.5h10.8" stroke="#777" stroke-width="1"/></svg><div class="abs" style="left:1691.8px;top:645.5px;width:1.5px;height:1.5px;border-radius:1px;background:#333"></div><div class="abs" style="left:1695.3999999999999px;top:645.5px;width:1.5px;height:1.5px;border-radius:1px;background:#333"></div><div class="abs" style="left:1699.0px;top:645.5px;width:1.5px;height:1.5px;border-radius:1px;background:#333"></div><svg class="abs" style="left:1655.8px;top:677.0px" width="12" height="9" viewBox="0 0 12 9"><path d="M.6 4.5C1.6 2 3.6 .7 6 .7s4.4 1.3 5.4 3.8C10.4 7 8.4 8.3 6 8.3S1.6 7 .6 4.5z" fill="none" stroke="#2a2a2a" stroke-width="1.05"/><circle cx="6" cy="4.5" r="1.9" fill="none" stroke="#2a2a2a" stroke-width="1.05"/></svg><svg class="abs" style="left:1674.3px;top:675.5px" width="11" height="11" viewBox="0 0 11 11"><path d="M2 7.6 L7.6 1.6 L9.3 3.2 L3.8 9 L1.7 9.4z" fill="none" stroke="#222" stroke-width=".9" stroke-linejoin="round"/><path d="M.2 10.5h10.8" stroke="#777" stroke-width="1"/></svg><div class="abs" style="left:1691.8px;top:681.0px;width:1.5px;height:1.5px;border-radius:1px;background:#333"></div><div class="abs" style="left:1695.3999999999999px;top:681.0px;width:1.5px;height:1.5px;border-radius:1px;background:#333"></div><div class="abs" style="left:1699.0px;top:681.0px;width:1.5px;height:1.5px;border-radius:1px;background:#333"></div><svg class="abs" style="left:1655.8px;top:712.0px" width="12" height="9" viewBox="0 0 12 9"><path d="M.6 4.5C1.6 2 3.6 .7 6 .7s4.4 1.3 5.4 3.8C10.4 7 8.4 8.3 6 8.3S1.6 7 .6 4.5z" fill="none" stroke="#2a2a2a" stroke-width="1.05"/><circle cx="6" cy="4.5" r="1.9" fill="none" stroke="#2a2a2a" stroke-width="1.05"/></svg><div class="abs" style="left:1675.0px;top:716.0px;width:1.5px;height:1.5px;border-radius:1px;background:#333"></div><div class="abs" style="left:1678.6px;top:716.0px;width:1.5px;height:1.5px;border-radius:1px;background:#333"></div><div class="abs" style="left:1682.2px;top:716.0px;width:1.5px;height:1.5px;border-radius:1px;background:#333"></div><div class="abs" style="left:163px;top:737.5px;width:1099px;height:5.5px;border-radius:3px;background:#b9b9bf"></div><svg class="abs" style="left:153.5px;top:737.5px" width="5" height="6" viewBox="0 0 5 6"><path d="M4.6 .3v5.4L.4 3z" fill="#b5b5ba"/></svg><svg class="abs" style="left:1703.5px;top:737.3px" width="5" height="6" viewBox="0 0 5 6"><path d="M.4 .3v5.4L4.6 3z" fill="#b5b5ba"/></svg><div class="pg" style="left:1288px;width:23.7px;"></div><svg class="abs" style="left:1296px;top:763.5px" width="7" height="8" viewBox="0 0 7 8"><path d="M5 .8 L1.8 4 L5 7.2" fill="none" stroke="#c4c6cc" stroke-width="1"/></svg><div class="pg" style="left:1317.5px;width:24.3px;border-color:#2d35ad;color:#2d35ad;border-width:1.3px;line-height:23px">1</div><div class="pg" style="left:1347.5px;width:23.7px;">2</div><div class="pg" style="left:1377.3px;width:23.7px;">3</div><div class="pg" style="left:1407px;width:23.7px;">4</div><div class="pg" style="left:1436.8px;width:23.7px;">5</div><div class="abs" style="left:1473.0px;top:766.3px;width:1.7px;height:1.7px;border-radius:1px;background:#bcbcc2"></div><div class="abs" style="left:1477.35px;top:766.3px;width:1.7px;height:1.7px;border-radius:1px;background:#bcbcc2"></div><div class="abs" style="left:1481.7px;top:766.3px;width:1.7px;height:1.7px;border-radius:1px;background:#bcbcc2"></div><div class="pg" style="left:1495.3px;width:24.3px;">80</div><div class="pg" style="left:1525px;width:24.5px;"></div><svg class="abs" style="left:1534px;top:763.5px" width="7" height="8" viewBox="0 0 7 8"><path d="M2 .8 L5.2 4 L2 7.2" fill="none" stroke="#444" stroke-width="1"/></svg><div class="pg" style="left:1560px;width:63.5px;"><span style="position:absolute;left:7.5px">10 / trang</span></div><svg style="position:absolute;left:1610.0px;top:763.5px" viewBox="0 0 10 10" width="7" height="7"><path d="M1.2 3 L5 7.2 L8.8 3" fill="none" stroke="#c4c6cc" stroke-width="1.0"/></svg><div class="t" style="left:1629.3px;top:767.5px;color:#444">Đến</div><div class="pg" style="left:1650px;width:30.5px;"></div><div class="t" style="left:1685.5px;top:767.5px;color:#444">Trang</div><div class="abs" style="left:1326px;top:227px;width:400px;height:147.6px;background:#fff;border-radius:2px;box-shadow:0 2px 10px rgba(0,0,0,.14);z-index:8"></div><div class="abs" style="left:1521.5px;top:370px;width:7px;height:7px;background:#fff;transform:rotate(45deg);z-index:8"></div><div style="position:absolute;left:0;top:0;z-index:9"><div class="t" style="left:1335.5px;top:250.8px;color:#2e2e2e">Công việc liên quan</div><div class="abs" style="left:1335px;top:267px;width:390px;height:26.5px;border:1px solid #e3e5e9;background:#fff"></div><div class="t" style="left:1341.5px;top:279.6px;color:#3c7bf8">PN00014003</div><div class="tag" style="left:1527.5px;top:271.8px;background:#ffeddc;color:#ffa95f;box-shadow:none;padding:0 5px">PN - Nhóm 3</div><div class="tag tg-d" style="left:1609.5px;top:271.8px;box-shadow:none;padding:0 4.8px">Đóng</div><div class="t" style="left:1335.5px;top:310px;color:#2e2e2e">Công việc phát sinh từ phàn nàn</div><div class="abs" style="left:1335px;top:327px;width:390px;height:34.5px;border:1px solid #e3e5e9;background:#fff"></div><div class="t" style="left:1341.5px;top:343.8px;color:#3573f5">WO00123360 - Gian hàng bẩn, nhiều rác, hàng hóa lộn xộn</div><div class="abs" style="left:1583px;top:330px;width:48.8px;height:16.3px;background:#ffeddc"></div><div class="abs" style="left:1601.8px;top:346px;width:10px;height:9.5px;background:#ffeddc"></div><div class="abs" style="left:1583px;top:332.5px;width:48.8px;text-align:center;line-height:11.5px;color:#ffa95f;white-space:nowrap">PN - Nhóm<br>3</div><div class="tag tg-b" style="left:1646.3px;top:336.3px;box-shadow:none;padding:0 4.6px">Tạo mới</div></div></body></html>
